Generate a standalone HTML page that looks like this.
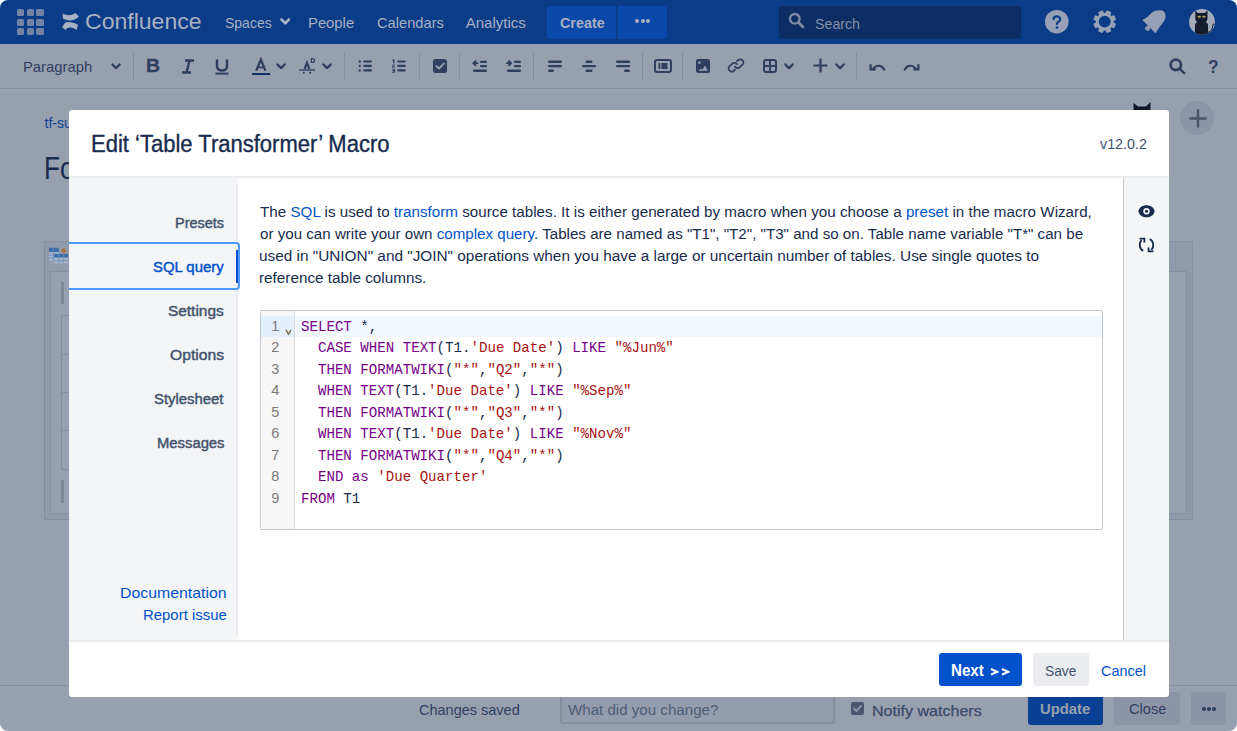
<!DOCTYPE html>
<html><head><meta charset="utf-8"><title>Edit Table Transformer Macro</title>
<style>
*{box-sizing:border-box;margin:0;padding:0}
html,body{width:1237px;height:731px;overflow:hidden;background:#fff}
body{font-family:"Liberation Sans",sans-serif;position:relative}
#page{position:absolute;left:0;top:0;width:1237px;height:731px;border-radius:8px;overflow:hidden}
.a{position:absolute;display:block}
.t{position:absolute;line-height:1;white-space:pre;transform-origin:0 0}
.lk{color:#0052CC}
.code{font-family:"Liberation Mono",monospace;font-size:15px;color:#172B4D}
.k{color:#770088}.s{color:#AA1111}
</style></head><body><div id="page">
<div class="a" style="left:0px;top:0px;width:1237px;height:44px;background:#0B3C88"></div>
<div class="a" style="left:17px;top:8.9px;width:7.4px;height:7px;background:#7283A6;border-radius:1.5px"></div>
<div class="a" style="left:17px;top:18.6px;width:7.4px;height:7px;background:#7283A6;border-radius:1.5px"></div>
<div class="a" style="left:17px;top:28.3px;width:7.4px;height:7px;background:#7283A6;border-radius:1.5px"></div>
<div class="a" style="left:26.7px;top:8.9px;width:7.4px;height:7px;background:#7283A6;border-radius:1.5px"></div>
<div class="a" style="left:26.7px;top:18.6px;width:7.4px;height:7px;background:#7283A6;border-radius:1.5px"></div>
<div class="a" style="left:26.7px;top:28.3px;width:7.4px;height:7px;background:#7283A6;border-radius:1.5px"></div>
<div class="a" style="left:36.4px;top:8.9px;width:7.4px;height:7px;background:#7283A6;border-radius:1.5px"></div>
<div class="a" style="left:36.4px;top:18.6px;width:7.4px;height:7px;background:#7283A6;border-radius:1.5px"></div>
<div class="a" style="left:36.4px;top:28.3px;width:7.4px;height:7px;background:#7283A6;border-radius:1.5px"></div>
<svg class="a" style="left:58px;top:10px;" width="26" height="24" viewBox="0 0 26 24"><path d="M4.8 3.6 C9 5.6 13 6 17.4 3 L21 6.4 C16 11.6 9 11.2 4.8 8.2 Z" fill="#A6B0C3"/><path d="M7.2 12.4 C10.5 11.4 15 11.8 20 14.8 L18.6 19.9 C15 17.4 11.5 16.9 9 18.2 L7.6 19.9 L4 17.2 Z" fill="#A6B0C3"/></svg>
<div class="t" style="left:85.25px;top:11.40px;font-size:22px;color:#A9B1C2;transform:scaleX(1.0476);">Confluence</div>
<div class="t" style="left:224.70px;top:15.00px;font-size:15px;color:#A9B1C2;transform:scaleX(0.9327);">Spaces</div>
<svg class="a" style="left:279.5px;top:17.8px;" width="10.5" height="6.8" viewBox="0 0 10.5 6.8"><path d="M1.5 1.5 L5.25 5.3 L9.0 1.5" stroke="#A9B1C2" stroke-width="2.6" fill="none" stroke-linecap="round" stroke-linejoin="round"/></svg>
<div class="t" style="left:308.21px;top:15.00px;font-size:15px;color:#A9B1C2;transform:scaleX(0.9876);">People</div>
<div class="t" style="left:376.70px;top:15.00px;font-size:15px;color:#A9B1C2;transform:scaleX(0.9783);">Calendars</div>
<div class="t" style="left:465.70px;top:15.00px;font-size:15px;color:#A9B1C2;">Analytics</div>
<div class="a" style="left:547px;top:6px;width:69px;height:33px;background:#0A48AA;border-radius:3px 0 0 3px"></div>
<div class="a" style="left:618px;top:6px;width:49px;height:33px;background:#0A48AA;border-radius:0 3px 3px 0"></div>
<div class="t" style="left:560.00px;top:14.70px;font-size:15px;font-weight:bold;color:#A9B1C2;transform:scaleX(0.9558);">Create</div>
<div class="a" style="left:635px;top:19.2px;width:4px;height:4px;background:#A9B1C2;border-radius:50%"></div>
<div class="a" style="left:640.6px;top:19.2px;width:4px;height:4px;background:#A9B1C2;border-radius:50%"></div>
<div class="a" style="left:646.2px;top:19.2px;width:4px;height:4px;background:#A9B1C2;border-radius:50%"></div>
<div class="a" style="left:779px;top:6px;width:242px;height:33px;background:#0C2E64;border-radius:3px"></div>
<svg class="a" style="left:788px;top:12px;" width="17" height="17" viewBox="0 0 17 17"><circle cx="6.8" cy="6.8" r="4.8" stroke="#7D8BA3" stroke-width="2.4" fill="none"/><path d="M10.5 10.5 L15 15" stroke="#7D8BA3" stroke-width="2.6" stroke-linecap="round"/></svg>
<div class="t" style="left:814.60px;top:15.80px;font-size:15px;color:#8391AA;transform:scaleX(0.9473);">Search</div>
<svg class="a" style="left:1044px;top:9px;" width="26" height="26" viewBox="0 0 26 26"><circle cx="12.8" cy="12.7" r="11.8" fill="#96A0B6"/><path d="M9.6 10.2 C9.6 6.6 16.2 6.4 16.2 10.2 C16.2 12.6 13 12.6 13 15" stroke="#0B3C88" stroke-width="2.2" fill="none" stroke-linecap="round"/><circle cx="13" cy="18.6" r="1.4" fill="#0B3C88"/></svg>
<svg class="a" style="left:1092px;top:9px;" width="26" height="26" viewBox="0 0 26 26"><rect x="10.1" y="1.3" width="5.2" height="5" rx="1.2" fill="#96A0B6" transform="rotate(22.5 12.7 12.7)"/><rect x="10.1" y="1.3" width="5.2" height="5" rx="1.2" fill="#96A0B6" transform="rotate(67.5 12.7 12.7)"/><rect x="10.1" y="1.3" width="5.2" height="5" rx="1.2" fill="#96A0B6" transform="rotate(112.5 12.7 12.7)"/><rect x="10.1" y="1.3" width="5.2" height="5" rx="1.2" fill="#96A0B6" transform="rotate(157.5 12.7 12.7)"/><rect x="10.1" y="1.3" width="5.2" height="5" rx="1.2" fill="#96A0B6" transform="rotate(202.5 12.7 12.7)"/><rect x="10.1" y="1.3" width="5.2" height="5" rx="1.2" fill="#96A0B6" transform="rotate(247.5 12.7 12.7)"/><rect x="10.1" y="1.3" width="5.2" height="5" rx="1.2" fill="#96A0B6" transform="rotate(292.5 12.7 12.7)"/><rect x="10.1" y="1.3" width="5.2" height="5" rx="1.2" fill="#96A0B6" transform="rotate(337.5 12.7 12.7)"/><circle cx="12.7" cy="12.7" r="7.4" fill="none" stroke="#96A0B6" stroke-width="3.0"/></svg>
<svg class="a" style="left:1141px;top:9px;" width="26" height="26" viewBox="0 0 26 26"><circle cx="6.6" cy="19.4" r="2.4" fill="#96A0B6"/><path d="M1.3 11 C5 9.6 8.4 6.2 11 3.6 C14 1 20 0.6 22.8 2.4 C25.2 4.6 25 9.6 22.5 13 C19.6 16.6 17 20 14.5 24.2 Z" fill="#96A0B6"/></svg>
<svg class="a" style="left:1188px;top:8px;" width="28" height="28" viewBox="0 0 28 28"><defs><clipPath id="avc"><circle cx="14" cy="13.9" r="12.9"/></clipPath></defs><circle cx="14" cy="13.9" r="12.9" fill="#A3ABBB"/><g clip-path="url(#avc)"><path d="M7.3 2.3 L9.8 5 L16.8 5 L19.5 2.3 L19.5 10 C19.5 12.5 18.5 13.5 17.5 14 C19 14.5 20 15.5 20 17.5 L20.2 28 L6.8 28 L7 17.5 C7 15.5 8 14.5 9.3 14 C8.2 13.5 7.3 12.5 7.3 10 Z" fill="#141C2E"/><path d="M19.8 24.5 C23 24 24.6 20.5 24.8 17.5 C25 15.6 26.2 15.6 26.4 17.2" stroke="#141C2E" stroke-width="1" fill="none"/></g><ellipse cx="11.3" cy="8.7" rx="1.7" ry="1.0" fill="#B5A060"/><ellipse cx="15.9" cy="8.7" rx="1.7" ry="1.0" fill="#B5A060"/></svg>
<div class="a" style="left:0px;top:44px;width:1237px;height:44px;background:#97A0AF"></div>
<div class="a" style="left:0px;top:88px;width:1237px;height:1px;background:#858FA1"></div>
<div class="t" style="left:22.61px;top:58.90px;font-size:15px;color:#2F405F;transform:scaleX(0.9868);">Paragraph</div>
<svg class="a" style="left:110.5px;top:62.599999999999994px;" width="10.1" height="6.8" viewBox="0 0 10.1 6.8"><path d="M1.5 1.5 L5.05 5.3 L8.6 1.5" stroke="#2F405F" stroke-width="2.2" fill="none" stroke-linecap="round" stroke-linejoin="round"/></svg>
<div class="a" style="left:132.9px;top:52px;width:1px;height:29px;background:#858FA1"></div>
<div class="a" style="left:344.1px;top:52px;width:1px;height:29px;background:#858FA1"></div>
<div class="a" style="left:419.1px;top:52px;width:1px;height:29px;background:#858FA1"></div>
<div class="a" style="left:458.6px;top:52px;width:1px;height:29px;background:#858FA1"></div>
<div class="a" style="left:532.9px;top:52px;width:1px;height:29px;background:#858FA1"></div>
<div class="a" style="left:641.8px;top:52px;width:1px;height:29px;background:#858FA1"></div>
<div class="a" style="left:682px;top:52px;width:1px;height:29px;background:#858FA1"></div>
<div class="a" style="left:856px;top:52px;width:1px;height:29px;background:#858FA1"></div>
<div class="t" style="left:146.39px;top:58.30px;font-size:17.5px;font-weight:bold;color:#2F405F;transform:scaleX(1.1091);-webkit-text-stroke:0.3px #2F405F;">B</div>
<svg class="a" style="left:181px;top:59px;" width="14" height="15" viewBox="0 0 14 15"><path d="M4 1.5 H13 M1 13.5 H10 M8.5 1.5 L5.5 13.5" stroke="#2F405F" stroke-width="2.4" fill="none"/></svg>
<svg class="a" style="left:214px;top:58px;" width="16" height="17" viewBox="0 0 16 17"><path d="M3 1.5 V8 C3 11.5 5 12.5 8 12.5 C11 12.5 13 11.5 13 8 V1.5" stroke="#2F405F" stroke-width="2.4" fill="none"/><rect x="1.5" y="14.6" width="13" height="2" fill="#2F405F"/></svg>
<svg class="a" style="left:251px;top:57px;" width="20" height="19" viewBox="0 0 20 19"><path d="M5.2 13.6 L9.9 2.6 L14.4 13.6" stroke="#2F405F" stroke-width="2.3" fill="none" stroke-linejoin="miter"/><path d="M7 10.4 H12.8" stroke="#2F405F" stroke-width="1.7"/><rect x="1" y="16.1" width="18.2" height="1.9" fill="#0B2A5F"/></svg>
<svg class="a" style="left:276.0px;top:62.599999999999994px;" width="10.1" height="6.8" viewBox="0 0 10.1 6.8"><path d="M1.5 1.5 L5.05 5.3 L8.6 1.5" stroke="#2F405F" stroke-width="2.4" fill="none" stroke-linecap="round" stroke-linejoin="round"/></svg>
<svg class="a" style="left:298px;top:57px;" width="19" height="18" viewBox="0 0 19 18"><path d="M6.6 12 L9 5.8 L11.4 12" stroke="#2F405F" stroke-width="2.2" fill="none"/><path d="M13.4 1.6 h1.2 a1.9 1.9 0 0 1 0 3.8 h-1.2 z" stroke="#2F405F" stroke-width="1.3" fill="none"/><rect x="1.2" y="12.1" width="16" height="1.8" fill="#4A5877"/><path d="M6.2 14.8 L5.4 16.6 M11.8 14.8 L12.6 16.6" stroke="#2F405F" stroke-width="1.8"/></svg>
<svg class="a" style="left:322.0px;top:62.599999999999994px;" width="10.1" height="6.8" viewBox="0 0 10.1 6.8"><path d="M1.5 1.5 L5.05 5.3 L8.6 1.5" stroke="#2F405F" stroke-width="2.4" fill="none" stroke-linecap="round" stroke-linejoin="round"/></svg>
<svg class="a" style="left:357px;top:59px;" width="17" height="14" viewBox="0 0 17 14"><circle cx="2.7" cy="2.50" r="1.2" fill="#2F405F"/><rect x="6.2" y="1.40" width="8.8" height="2.2" rx="1.1" fill="#2F405F"/><circle cx="2.7" cy="6.95" r="1.2" fill="#2F405F"/><rect x="6.2" y="5.85" width="8.8" height="2.2" rx="1.1" fill="#2F405F"/><circle cx="2.7" cy="11.40" r="1.2" fill="#2F405F"/><rect x="6.2" y="10.30" width="8.8" height="2.2" rx="1.1" fill="#2F405F"/></svg>
<svg class="a" style="left:391px;top:59px;" width="17" height="14" viewBox="0 0 17 14"><path d="M1.6 1.6 L2.8 1 V4.4" stroke="#2F405F" stroke-width="1.3" fill="none"/><path d="M1.2 6.1 h2.6 M1.2 7.6 L3.8 6.8 M1.2 8.2 h2.6" stroke="#2F405F" stroke-width="0.9" fill="none"/><path d="M1.2 10.3 h2.4 v3 h-2.4 M1.4 11.8 h2.2" stroke="#2F405F" stroke-width="1" fill="none"/><rect x="6.2" y="1.40" width="8.6" height="2.2" rx="1.1" fill="#2F405F"/><rect x="6.2" y="5.85" width="8.6" height="2.2" rx="1.1" fill="#2F405F"/><rect x="6.2" y="10.30" width="8.6" height="2.2" rx="1.1" fill="#2F405F"/></svg>
<svg class="a" style="left:432.5px;top:59px;" width="14" height="14" viewBox="0 0 14 14"><rect x="0" y="0" width="14" height="14" rx="2.5" fill="#2F405F"/><path d="M3.4 7.2 L6 9.6 L10.8 4.6" stroke="#97A0AF" stroke-width="2" fill="none" stroke-linecap="round" stroke-linejoin="round"/></svg>
<svg class="a" style="left:471.5px;top:60px;" width="16" height="13" viewBox="0 0 16 13"><path d="M5.5 3.2 H1.5 M3.6 1 L1.4 3.2 L3.6 5.4" stroke="#2F405F" stroke-width="1.8" fill="none" stroke-linecap="round"/><rect x="8" y="0.8" width="7" height="2.3" rx="1.1" fill="#2F405F"/><rect x="8" y="5" width="7" height="2.3" rx="1.1" fill="#2F405F"/><rect x="1" y="9.6" width="14" height="2.3" rx="1.1" fill="#2F405F"/></svg>
<svg class="a" style="left:505.5px;top:60px;" width="16" height="13" viewBox="0 0 16 13"><path d="M1 3.2 H5 M2.9 1 L5.1 3.2 L2.9 5.4" stroke="#2F405F" stroke-width="1.8" fill="none" stroke-linecap="round"/><rect x="8" y="0.8" width="7" height="2.3" rx="1.1" fill="#2F405F"/><rect x="8" y="5" width="7" height="2.3" rx="1.1" fill="#2F405F"/><rect x="1" y="9.6" width="14" height="2.3" rx="1.1" fill="#2F405F"/></svg>
<svg class="a" style="left:547.5px;top:60px;" width="14" height="13" viewBox="0 0 14 13"><rect x="0" y="0.6" width="14" height="2.3" rx="1.1" fill="#2F405F"/><rect x="0" y="5" width="14" height="2.3" rx="1.1" fill="#2F405F"/><rect x="0" y="9.6" width="6" height="2.3" rx="1.1" fill="#2F405F"/></svg>
<svg class="a" style="left:581.8px;top:60px;" width="14" height="13" viewBox="0 0 14 13"><rect x="3.5" y="0.6" width="7" height="2.3" rx="1.1" fill="#2F405F"/><rect x="0" y="5" width="14" height="2.3" rx="1.1" fill="#2F405F"/><rect x="3.5" y="9.6" width="7" height="2.3" rx="1.1" fill="#2F405F"/></svg>
<svg class="a" style="left:615.5px;top:60px;" width="14" height="13" viewBox="0 0 14 13"><rect x="0" y="0.6" width="14" height="2.3" rx="1.1" fill="#2F405F"/><rect x="0" y="5" width="14" height="2.3" rx="1.1" fill="#2F405F"/><rect x="8" y="9.6" width="6" height="2.3" rx="1.1" fill="#2F405F"/></svg>
<svg class="a" style="left:653.5px;top:59px;" width="18" height="14" viewBox="0 0 18 14"><rect x="1" y="1" width="16" height="12" rx="2" stroke="#2F405F" stroke-width="2" fill="none"/><rect x="4.5" y="4" width="1.8" height="6" fill="#2F405F"/><rect x="7.5" y="4" width="6" height="6" fill="#2F405F"/></svg>
<svg class="a" style="left:696px;top:59px;" width="14" height="14" viewBox="0 0 14 14"><rect x="0" y="0" width="14" height="14" rx="2.2" fill="#2F405F"/><rect x="2.2" y="2.4" width="2.4" height="2.4" rx="0.6" fill="#97A0AF"/><path d="M2.4 11.8 L5 9.6 L6.6 10.6 L9 6.6 L11.8 11.8 Z" fill="#97A0AF"/></svg>
<svg class="a" style="left:726.4px;top:55.2px;" width="20.9" height="20.9" viewBox="0 0 24 24"><path fill="#2F405F" d="M12.856 5.457l-.937.92a1.002 1.002 0 0 0 0 1.437 1.047 1.047 0 0 0 1.463 0l.984-.966c.967-.95 2.542-1.135 3.602-.288a2.540 2.540 0 0 1 .203 3.810l-2.903 2.852a2.646 2.646 0 0 1-3.696 0l-1.110-1.090L9 13.570l1.108 1.089c1.822 1.788 4.802 1.788 6.622 0l2.905-2.852a4.558 4.558 0 0 0-.357-6.820c-1.893-1.517-4.695-1.226-6.422.470zm-2.720 13.086l.937-.92a1.002 1.002 0 0 0 0-1.437 1.047 1.047 0 0 0-1.462 0l-.985.966c-.967.950-2.542 1.135-3.602.288a2.540 2.540 0 0 1-.203-3.810l2.903-2.852a2.646 2.646 0 0 1 3.696 0l1.110 1.090L14 10.430l-1.108-1.089c-1.822-1.788-4.802-1.788-6.622 0l-2.905 2.852a4.558 4.558 0 0 0 .357 6.820c1.893 1.517 4.695 1.226 6.422-.470z"/></svg>
<svg class="a" style="left:762.5px;top:59px;" width="14" height="14" viewBox="0 0 14 14"><rect x="1" y="1" width="12" height="12" rx="2" stroke="#2F405F" stroke-width="2" fill="none"/><path d="M7 1 V13 M1 7 H13" stroke="#2F405F" stroke-width="2"/></svg>
<svg class="a" style="left:784.4px;top:62.599999999999994px;" width="10.1" height="6.8" viewBox="0 0 10.1 6.8"><path d="M1.5 1.5 L5.05 5.3 L8.6 1.5" stroke="#2F405F" stroke-width="2.4" fill="none" stroke-linecap="round" stroke-linejoin="round"/></svg>
<svg class="a" style="left:813px;top:58px;" width="15" height="15" viewBox="0 0 15 15"><path d="M7.5 0.5 V14.5 M0.5 7.5 H14.5" stroke="#2F405F" stroke-width="2.2"/></svg>
<svg class="a" style="left:835.2px;top:62.8px;" width="10.1" height="6.8" viewBox="0 0 10.1 6.8"><path d="M1.5 1.5 L5.05 5.3 L8.6 1.5" stroke="#2F405F" stroke-width="2.4" fill="none" stroke-linecap="round" stroke-linejoin="round"/></svg>
<svg class="a" style="left:868.5px;top:62.5px;" width="17" height="8" viewBox="0 0 17 8"><path d="M4.4 5.4 C7.5 1.8 12.6 1.6 15.2 6.6" stroke="#2F405F" stroke-width="2.2" fill="none" stroke-linecap="round"/><path d="M1.6 1.2 L1.6 6.4 L6.6 6.4" stroke="#2F405F" stroke-width="2.2" fill="none"/></svg>
<svg class="a" style="left:902.5px;top:62.5px;" width="17" height="8" viewBox="0 0 17 8"><g transform="translate(17 0) scale(-1 1)"><path d="M4.4 5.4 C7.5 1.8 12.6 1.6 15.2 6.6" stroke="#2F405F" stroke-width="2.2" fill="none" stroke-linecap="round"/><path d="M1.6 1.2 L1.6 6.4 L6.6 6.4" stroke="#2F405F" stroke-width="2.2" fill="none"/></g></svg>
<svg class="a" style="left:1168.5px;top:57.5px;" width="17" height="17" viewBox="0 0 17 17"><circle cx="6.8" cy="6.8" r="5.2" stroke="#2F405F" stroke-width="2.8" fill="none"/><path d="M10.8 10.8 L15.2 15.2" stroke="#2F405F" stroke-width="2.4" stroke-linecap="round"/></svg>
<div class="t" style="left:1208.10px;top:57.90px;font-size:18px;font-weight:bold;color:#2F405F;transform:scaleX(0.9700);">?</div>
<div class="a" style="left:0px;top:89px;width:1237px;height:596px;background:#97A0AF"></div>
<div class="t" style="left:44.50px;top:115.80px;font-size:14px;color:#0A4093;">tf-support</div>
<div class="t" style="left:44.00px;top:151.90px;font-size:32px;color:#172B4D;transform:scaleX(0.82);">For</div>
<div class="a" style="left:1180px;top:101px;width:34px;height:34px;background:#8C95A7;border-radius:50%"></div>
<svg class="a" style="left:1188.5px;top:108.5px;" width="18" height="19" viewBox="0 0 18 19"><path d="M9 0.5 V18.5 M0.5 9.5 H17.5" stroke="#4B5569" stroke-width="2.4"/></svg>
<svg class="a" style="left:1132px;top:101px;" width="20" height="10" viewBox="0 0 20 10"><path d="M1.5 10 L1.5 2 L6 5.5 L14 5.5 L18.5 1 L18.5 10 Z" fill="#0F1626"/></svg>
<div class="a" style="left:44px;top:241px;width:1149px;height:279px;border:1px solid #858FA1;background:#919AAB"></div>
<div class="a" style="left:50px;top:271px;width:1137px;height:243px;border:1px solid #858FA1;background:#97A0AF"></div>
<svg class="a" style="left:48px;top:246px;" width="22" height="19" viewBox="0 0 22 19"><rect x="1" y="1.7" width="9.8" height="13" fill="#A3B3C8"/><rect x="1" y="1.7" width="9.8" height="4.3" fill="#3D6EA8"/><path d="M1 9 H10.8 M1 11.8 H10.8 M5.6 1.7 V14.7" stroke="#6E8DB8" stroke-width="0.8"/><rect x="6.2" y="7.8" width="13.9" height="9.8" fill="#A3B3C8"/><rect x="6.2" y="7.8" width="13.9" height="3.7" fill="#3D6EA8"/><path d="M6.2 14.6 H20.1 M10.8 7.8 V17.6 M15.6 7.8 V17.6" stroke="#6E8DB8" stroke-width="0.8"/><path d="M15.8 2 V7.4 M13.1 4.7 H18.5" stroke="#A8743C" stroke-width="2"/></svg>
<div class="a" style="left:61px;top:282px;width:3px;height:22px;background:#7D879A"></div>
<div class="a" style="left:61px;top:480px;width:3px;height:23px;background:#7D879A"></div>
<div class="a" style="left:61px;top:315px;width:9px;height:155px;border:1px solid #858FA1;border-right:none"></div>
<div class="a" style="left:62px;top:354px;width:8px;height:1px;background:#858FA1"></div>
<div class="a" style="left:62px;top:392px;width:8px;height:1px;background:#858FA1"></div>
<div class="a" style="left:62px;top:430px;width:8px;height:1px;background:#858FA1"></div>
<div class="a" style="left:0px;top:685px;width:1237px;height:46px;background:#97A0AF"></div>
<div class="a" style="left:0px;top:685px;width:1237px;height:1px;background:#858FA1"></div>
<div class="t" style="left:418.60px;top:702.30px;font-size:15px;color:#2F405F;transform:scaleX(0.9664);">Changes saved</div>
<div class="a" style="left:560px;top:690px;width:275px;height:34px;border:2px solid #858FA1;border-radius:3px;background:#949DAD"></div>
<div class="t" style="left:567.60px;top:702.30px;font-size:15px;color:#4D5D77;transform:scaleX(1.0072);">What did you change?</div>
<svg class="a" style="left:851px;top:702px;" width="13" height="13" viewBox="0 0 13 13"><rect x="0" y="0" width="13" height="13" rx="2" fill="#4A5670"/><path d="M3 6.6 L5.4 9 L10 4" stroke="#97A0AF" stroke-width="1.8" fill="none" stroke-linecap="round" stroke-linejoin="round"/></svg>
<div class="t" style="left:872.16px;top:703.00px;font-size:15.5px;color:#3A4A68;transform:scaleX(1.0352);-webkit-text-stroke:0.25px #3A4A68;">Notify watchers</div>
<div class="a" style="left:1028px;top:690px;width:75px;height:35px;background:#0A4093;border-radius:3px"></div>
<div class="t" style="left:1040.30px;top:700.80px;font-size:15px;font-weight:bold;color:#97A0AF;transform:scaleX(0.9882);">Update</div>
<div class="a" style="left:1114px;top:692px;width:66px;height:33px;background:#8C95A7;border-radius:3px"></div>
<div class="t" style="left:1128.90px;top:700.80px;font-size:15.5px;color:#2F405F;transform:scaleX(0.9434);">Close</div>
<div class="a" style="left:1191px;top:692px;width:35px;height:33px;background:#8C95A7;border-radius:3px"></div>
<div class="a" style="left:1202px;top:707px;width:3.6px;height:3.6px;background:#2F405F;border-radius:50%"></div>
<div class="a" style="left:1207px;top:707px;width:3.6px;height:3.6px;background:#2F405F;border-radius:50%"></div>
<div class="a" style="left:1212px;top:707px;width:3.6px;height:3.6px;background:#2F405F;border-radius:50%"></div>
<div class="a" style="left:69px;top:110px;width:1100px;height:587px;background:#FFFFFF;border-radius:3px"></div>
<div class="a" style="left:69px;top:176px;width:1100px;height:2px;background:#EBECF0"></div>
<div class="t" style="left:90.84px;top:132.90px;font-size:23px;color:#172B4D;transform:scaleX(0.9571);-webkit-text-stroke:0.35px #172B4D;">Edit ‘Table Transformer’ Macro</div>
<div class="t" style="left:1099.50px;top:136.00px;font-size:15px;color:#42526E;transform:scaleX(0.9517);">v12.0.2</div>
<div class="a" style="left:69px;top:178px;width:169px;height:462px;background:#F4F5F7"></div>
<div class="a" style="left:236px;top:184px;width:2px;height:451px;background:#EBECF0"></div>
<div class="a" style="left:1124px;top:178px;width:45px;height:462px;background:#F4F5F7"></div>
<div class="a" style="left:1123px;top:178px;width:1px;height:462px;background:#CCCCCC"></div>
<div class="a" style="left:69px;top:640px;width:1100px;height:2px;background:#EBECF0"></div>
<div class="a" style="left:69px;top:242px;width:171px;height:48px;border:2px solid #4C9AFF;border-left:none;border-radius:0 4px 4px 0"></div>
<div class="a" style="left:236px;top:250px;width:2px;height:33px;background:#0052CC"></div>
<div class="t" style="left:174.97px;top:215.00px;font-size:15.5px;color:#42526E;transform:scaleX(0.9344);-webkit-text-stroke:0.45px #42526E;">Presets</div>
<div class="t" style="left:152.90px;top:259.00px;font-size:15.5px;color:#0052CC;transform:scaleX(0.9604);-webkit-text-stroke:0.45px #0052CC;">SQL query</div>
<div class="t" style="left:168.40px;top:303.00px;font-size:15.5px;color:#42526E;transform:scaleX(0.9937);-webkit-text-stroke:0.45px #42526E;">Settings</div>
<div class="t" style="left:169.90px;top:347.00px;font-size:15.5px;color:#42526E;transform:scaleX(1.0136);-webkit-text-stroke:0.45px #42526E;">Options</div>
<div class="t" style="left:154.30px;top:391.00px;font-size:15.5px;color:#42526E;transform:scaleX(0.9580);-webkit-text-stroke:0.45px #42526E;">Stylesheet</div>
<div class="t" style="left:156.54px;top:435.00px;font-size:15.5px;color:#42526E;transform:scaleX(0.9557);-webkit-text-stroke:0.45px #42526E;">Messages</div>
<div class="t" style="left:120.34px;top:585.20px;font-size:15px;color:#0052CC;transform:scaleX(1.0558);">Documentation</div>
<div class="t" style="left:143.11px;top:607.20px;font-size:15px;color:#0052CC;transform:scaleX(0.9944);">Report issue</div>
<div class="t" style="left:260.30px;top:204.00px;font-size:15.5px;color:#172B4D;transform:scaleX(0.9808);">The <span class="lk">SQL</span> is used to <span class="lk">transform</span> source tables. It is either generated by macro when you choose a <span class="lk">preset</span> in the macro Wizard,</div>
<div class="t" style="left:260.30px;top:226.00px;font-size:15.5px;color:#172B4D;transform:scaleX(0.9767);">or you can write your own <span class="lk">complex query</span>. Tables are named as "T1", "T2", "T3" and so on. Table name variable "T*" can be</div>
<div class="t" style="left:259.31px;top:248.00px;font-size:15.5px;color:#172B4D;transform:scaleX(0.9900);">used in "UNION" and "JOIN" operations when you have a large or uncertain number of tables. Use single quotes to</div>
<div class="t" style="left:259.31px;top:270.00px;font-size:15.5px;color:#172B4D;transform:scaleX(0.9855);">reference table columns.</div>
<svg class="a" style="left:1138px;top:205px;" width="17" height="14" viewBox="0 0 17 14"><path d="M0.5 6.3 C1.5 -1.7 15.5 -1.7 16.5 6.3 C15.5 14.3 1.5 14.3 0.5 6.3 Z" fill="#172B4D"/><circle cx="8.5" cy="6.3" r="3.2" fill="#F4F5F7"/><circle cx="8.5" cy="6.3" r="1.5" fill="#172B4D"/></svg>
<svg class="a" style="left:1138px;top:237px;" width="17" height="16" viewBox="0 0 17 16"><path d="M5.2 14 C1.4 12 0.6 6 3.6 3.2" stroke="#172B4D" stroke-width="1.8" fill="none"/><path d="M1.6 1.6 L6.4 1.6 L6.4 5.6" stroke="#172B4D" stroke-width="1.8" fill="none"/><path d="M11.8 2 C15.6 4 16.4 10 13.4 12.8" stroke="#172B4D" stroke-width="1.8" fill="none"/><path d="M15.4 14.4 L10.6 14.4 L10.6 10.4" stroke="#172B4D" stroke-width="1.8" fill="none"/></svg>
<div class="a" style="left:260px;top:310px;width:843px;height:220px;border:1px solid #C1C7D0;border-radius:2px;background:#fff"></div>
<div class="a" style="left:261px;top:311px;width:33px;height:218px;background:#F7F7F7"></div>
<div class="a" style="left:294px;top:311px;width:1px;height:218px;background:#DDDDDD"></div>
<div class="a" style="left:261px;top:316px;width:33px;height:21px;background:#E3F0FC"></div>
<div class="a" style="left:295px;top:316px;width:807px;height:21px;background:#F0F7FF"></div>
<div class="t" style="left:271.30px;top:319.20px;font-size:14.5px;color:#7A7A7A;font-family:"Liberation Mono",monospace;">1</div>
<div class="t" style="left:271.30px;top:340.20px;font-size:14.5px;color:#7A7A7A;font-family:"Liberation Mono",monospace;">2</div>
<div class="t" style="left:271.30px;top:362.20px;font-size:14.5px;color:#7A7A7A;font-family:"Liberation Mono",monospace;">3</div>
<div class="t" style="left:271.30px;top:383.20px;font-size:14.5px;color:#7A7A7A;font-family:"Liberation Mono",monospace;">4</div>
<div class="t" style="left:271.30px;top:405.20px;font-size:14.5px;color:#7A7A7A;font-family:"Liberation Mono",monospace;">5</div>
<div class="t" style="left:271.30px;top:426.20px;font-size:14.5px;color:#7A7A7A;font-family:"Liberation Mono",monospace;">6</div>
<div class="t" style="left:271.30px;top:448.20px;font-size:14.5px;color:#7A7A7A;font-family:"Liberation Mono",monospace;">7</div>
<div class="t" style="left:271.30px;top:469.20px;font-size:14.5px;color:#7A7A7A;font-family:"Liberation Mono",monospace;">8</div>
<div class="t" style="left:271.30px;top:491.20px;font-size:14.5px;color:#7A7A7A;font-family:"Liberation Mono",monospace;">9</div>
<svg class="a" style="left:284.5px;top:328.5px;" width="7" height="6" viewBox="0 0 7 6"><path d="M1 0.8 L3.5 5.2 L6 0.8" stroke="#7A6A5A" stroke-width="1.4" fill="none"/></svg>
<div class="t code" style="left:301px;top:320px;transform:scaleX(0.9410)"><span class="k">SELECT</span> *,</div>
<div class="t code" style="left:301px;top:341px;transform:scaleX(0.9410)">  <span class="k">CASE</span> <span class="k">WHEN</span> <span class="k">TEXT</span>(T1.<span class="s">'Due Date'</span>) <span class="k">LIKE</span> <span class="s">"%Jun%"</span></div>
<div class="t code" style="left:301px;top:363px;transform:scaleX(0.9410)">  <span class="k">THEN</span> <span class="k">FORMATWIKI</span>(<span class="s">"*"</span>,<span class="s">"Q2"</span>,<span class="s">"*"</span>)</div>
<div class="t code" style="left:301px;top:384px;transform:scaleX(0.9410)">  <span class="k">WHEN</span> <span class="k">TEXT</span>(T1.<span class="s">'Due Date'</span>) <span class="k">LIKE</span> <span class="s">"%Sep%"</span></div>
<div class="t code" style="left:301px;top:406px;transform:scaleX(0.9410)">  <span class="k">THEN</span> <span class="k">FORMATWIKI</span>(<span class="s">"*"</span>,<span class="s">"Q3"</span>,<span class="s">"*"</span>)</div>
<div class="t code" style="left:301px;top:427px;transform:scaleX(0.9410)">  <span class="k">WHEN</span> <span class="k">TEXT</span>(T1.<span class="s">'Due Date'</span>) <span class="k">LIKE</span> <span class="s">"%Nov%"</span></div>
<div class="t code" style="left:301px;top:449px;transform:scaleX(0.9410)">  <span class="k">THEN</span> <span class="k">FORMATWIKI</span>(<span class="s">"*"</span>,<span class="s">"Q4"</span>,<span class="s">"*"</span>)</div>
<div class="t code" style="left:301px;top:470px;transform:scaleX(0.9410)">  <span class="k">END</span> <span class="k">as</span> <span class="s">'Due Quarter'</span></div>
<div class="t code" style="left:301px;top:492px;transform:scaleX(0.9410)"><span class="k">FROM</span> T1</div>
<div class="a" style="left:939px;top:653px;width:83px;height:33px;background:#0052CC;border-radius:3px"></div>
<div class="t" style="left:950.85px;top:662.90px;font-size:16px;font-weight:bold;color:#FFFFFF;transform:scaleX(0.9461);">Next</div>
<svg class="a" style="left:990.2px;top:667.5px;" width="9" height="9" viewBox="0 0 9 9"><path d="M0.9 1 L7.2 3.8 L0.9 6.6" stroke="#FFFFFF" stroke-width="2.1" fill="none" stroke-linejoin="miter"/></svg>
<svg class="a" style="left:1000.9px;top:667.5px;" width="9" height="9" viewBox="0 0 9 9"><path d="M0.9 1 L7.2 3.8 L0.9 6.6" stroke="#FFFFFF" stroke-width="2.1" fill="none" stroke-linejoin="miter"/></svg>
<div class="a" style="left:1033px;top:653px;width:56px;height:33px;background:#EBECF0;border-radius:3px"></div>
<div class="t" style="left:1045.00px;top:662.70px;font-size:15px;color:#42526E;transform:scaleX(0.9159);">Save</div>
<div class="t" style="left:1100.70px;top:662.70px;font-size:15px;color:#0052CC;transform:scaleX(0.9620);">Cancel</div>
</div></body></html>
